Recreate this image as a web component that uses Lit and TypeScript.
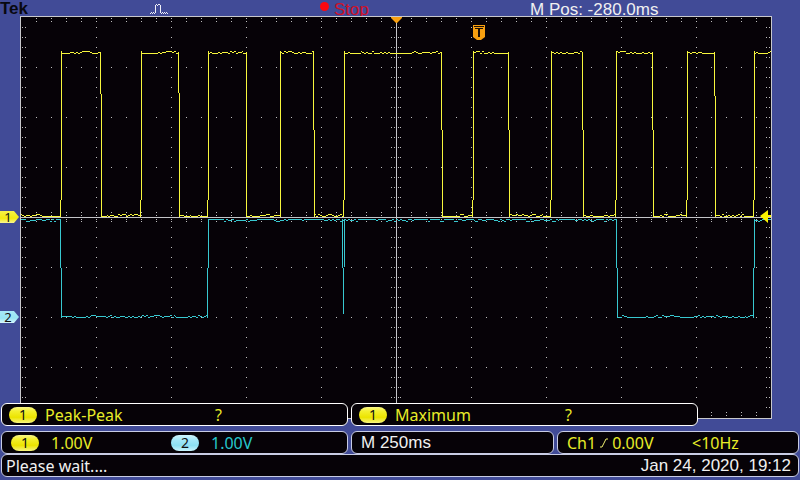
import { LitElement, html, svg, css } from "lit";
import { customElement } from "lit/decorators.js";

const LEFT = 21;
const RIGHT = 771;
const TOP = 17;
const BOTTOM = 418;
const CENTER_X = 396;
const CENTER_Y = 217;

const block = (x: number, y: number, w = 1, h = 1) => `M${x} ${y}h${w}v${h}h${-w}z`;

/** Dotted divisions plus the fine ticks on the axes and edges. */
function graticule(): string {
  let d = "";
  for (let x = LEFT + 15; x < RIGHT; x += 15) {
    for (let y = TOP + 50; y < BOTTOM - 10; y += 50) {
      if (y !== CENTER_Y) d += block(x, y);
    }
    for (const y of [18, 21, 212, 215, 219, 221, 412, 415]) d += block(x, y);
  }
  for (let y = TOP + 10; y < BOTTOM - 2; y += 10) {
    for (let x = LEFT + 75; x < RIGHT; x += 75) {
      if (x !== CENTER_X) d += block(x, y);
    }
    for (const x of [22, 25, 391, 394, 398, 400, 766, 769]) d += block(x, y);
  }
  return d;
}

/** Small repeatable jitter, quiet in places and busy in others. */
function jitter(x: number, seed: number): number {
  const step = Math.floor(x / 2);
  const wave = Math.abs(Math.sin(step * 12.9898 + seed * 78.233) * 43758.5453);
  const h = wave - Math.floor(wave);
  const busy = Math.sin(x / 8 + seed) > -0.5;
  if (!busy) return h < 0.15 ? 1 : 0;
  return h < 0.2 ? 2 : h < 0.6 ? 1 : 0;
}

function level(from: number, to: number, y: number, dir: number, seed: number): string {
  let d = "";
  for (let x = from; x <= to; x++) d += block(x, y + dir * jitter(x, seed));
  return d;
}

/** A vertical edge whose upper and lower halves may sit in different columns. */
function edge(upper: number, lower: number, y0: number, mid: number, y1: number): string {
  return block(upper, y0, 1, mid - y0) + block(lower, mid, 1, y1 - mid + 1);
}

// [rise at base, rise at top, fall at top, fall at base, jog height of the fall]
const PULSES = [
  [60, 61, 100, 101, 94],
  [140, 141, 178, 179, 93],
  [207, 208, 246, 246, 100],
  [280, 280, 313, 314, 130],
  [343, 344, 441, 442, 130],
  [472, 473, 508, 509, 130],
  [550, 551, 582, 583, 130],
  [615, 616, 652, 653, 130],
  [686, 687, 714, 715, 96],
];

function channelOne(): string {
  const hi = 51;
  const lo = 216;
  let d = "";
  let x = LEFT;
  for (const [r0, r1, f1, f0, jog] of PULSES) {
    d += level(x, r0, lo, -1, 5);
    d += edge(r1, r0, hi, 200, lo);
    d += level(r1, f1, hi + 2, -1, 11);
    d += edge(f1, f0, hi + 1, jog, lo);
    x = f0;
  }
  d += level(x, 753, lo, -1, 5);
  d += edge(754, 753, hi, 200, lo);
  d += level(754, 770, hi + 2, -1, 11);
  return d;
}

function channelTwo(): string {
  const hi = 219;
  const lo = 317;
  return (
    level(LEFT, 60, hi, 1, 3) +
    edge(60, 61, hi, 268, lo) +
    level(61, 207, lo, -1, 7) +
    edge(208, 207, hi, 268, lo) +
    level(208, 616, hi, 1, 3) +
    edge(342, 343, hi, 268, 313) +
    block(344, hi, 1, 48) +
    edge(616, 617, hi, 268, lo) +
    level(617, 753, lo, -1, 7) +
    edge(754, 753, hi, 268, lo) +
    level(754, 770, hi, 1, 3)
  );
}

@customElement("scope-screen")
class ScopeScreen extends LitElement {
  static styles = css`
    :host {
      display: block;
    }
    .screen {
      display: block;
      width: 100%;
      font-family: "Noto Sans", "Liberation Sans", sans-serif;
      font-size: 13px;
    }
  `;

  private tag(y: number, n: string, fill: string) {
    return svg`
      <path d="M0 ${y - 6}h14l5 6l-5 6h-14z" fill=${fill}></path>
      <text x="8" y=${y + 5} text-anchor="middle" fill="#101010">${n}</text>`;
  }

  render() {
    return html`
      <svg class="screen" viewBox="0 16 800 403" role="img" aria-label="Waveforms">
        <defs>
          <linearGradient id="yellow" x2="0" y2="1">
            <stop offset="0" stop-color="#f6f24a"></stop>
            <stop offset="0.6" stop-color="#f2ea10"></stop>
            <stop offset="1" stop-color="#f8f690"></stop>
          </linearGradient>
          <linearGradient id="cyan" x2="0" y2="1">
            <stop offset="0" stop-color="#a8e8f8"></stop>
            <stop offset="0.6" stop-color="#98e4f4"></stop>
            <stop offset="1" stop-color="#d8f6fc"></stop>
          </linearGradient>
        </defs>
        <path d="M20 16h752v403h-752z" fill="#c8c8cc"></path>
        <path d="M21 17h750v401h-750z" fill="#060207"></path>
        <g shape-rendering="crispEdges">
          <path d=${graticule()} fill="#bdbdbd"></path>
          <path d="M396 17h1v401h-1zM21 217h750v1h-750z" fill="#c4c4c8"></path>
          <path d=${channelOne()} fill="#f6f63c"></path>
          <path d=${channelTwo()} fill="#38c8d0"></path>
        </g>
        <path d="M391 17h11v1l-5 5h-1l-5 -5z" fill="#f8a010"></path>
        <path d="M473 25h12v12l-4 3h-4l-4 -3z" fill="#f8a010"></path>
        <path d="M474 26h10v1h-10zM475 28h8v1h-3v8h-2v-8h-3z" fill="#1a0e04"></path>
        <path d="M760 216l8 -6v5h3v2h-3v6z" fill="#fcf400"></path>
        ${this.tag(217, "1", "url(#yellow)")} ${this.tag(317, "2", "url(#cyan)")}
      </svg>
    `;
  }
}

@customElement("channel-badge")
class ChannelBadge extends LitElement {
  static properties = { channel: { type: Number } };
  declare channel: number;

  static styles = css`
    :host {
      display: block;
      flex: none;
    }
    .badge {
      width: 28px;
      height: 16px;
      border-radius: 8px;
      text-align: center;
      font: 14px/16px "Noto Sans", sans-serif;
      color: #101010;
    }
    .c1 {
      background: linear-gradient(#f8f68c, #f4f030 25%, #ece400 65%, #f6f480);
    }
    .c2 {
      background: linear-gradient(#d0f4fc, #a4e8f8 30%, #8ce0f2 65%, #c8f4fc);
    }
  `;

  render() {
    return html`<div class="badge c${this.channel}">${this.channel}</div>`;
  }
}

@customElement("app-root")
class AppRoot extends LitElement {
  static styles = css`
    :host {
      display: flex;
      flex-direction: column;
      min-height: 100vh;
      box-sizing: border-box;
      background: #414b97;
      color: #f0f0f0;
      font: 16px/20px "Noto Sans", "Liberation Sans", sans-serif;
      white-space: nowrap;
    }
    .header {
      display: grid;
      grid-template-columns: 150fr 170fr 210fr 270fr;
      height: 16px;
      line-height: 19px;
    }
    .arial,
    .header {
      font-family: "Liberation Sans", Arial, sans-serif;
      font-size: 17px;
    }
    .brand {
      font-weight: bold;
      line-height: 18px;
      color: #080810;
    }
    .status {
      display: flex;
      gap: 5px;
      color: #d01028;
    }
    .dot {
      width: 9px;
      height: 9px;
      margin-top: 2px;
      border-radius: 50%;
      background: #fc0810;
    }
    .pulse {
      display: block;
      width: 18px;
      height: 16px;
    }
    .row {
      display: grid;
      gap: 3px;
      padding: 0 1px;
    }
    .measure {
      position: relative;
      grid-template-columns: 347fr 347fr 98fr;
      margin-top: -16px;
    }
    .settings {
      grid-template-columns: 347fr 203fr 242fr;
      margin-top: 5px;
    }
    .message {
      grid-template-columns: 1fr;
    }
    .panel {
      display: flex;
      align-items: center;
      box-sizing: border-box;
      height: 23px;
      padding: 0 7px;
      border: 1px solid #c8cce4;
      border-radius: 6px;
      background: #060207;
    }
    .measure .panel {
      border-color: #ffffff;
    }
    .message .panel {
      padding: 0 7px 0 4px;
      justify-content: space-between;
    }
    .pair {
      display: flex;
      align-items: center;
      flex: 1;
      gap: 8px;
    }
    .settings .panel {
      padding: 0 9px;
    }
    .settings .pair {
      flex: 160;
      gap: 12px;
    }
    .settings .cyan {
      flex: 167;
    }
    .name {
      flex: 162;
    }
    .value {
      flex: 125;
    }
    .yellow {
      color: #e8ec28;
    }
    .cyan {
      color: #28c8cc;
    }
    .trigger {
      display: flex;
      align-items: center;
      flex: 125;
      gap: 4px;
    }
    .freq {
      flex: 97;
    }
    .slope {
      width: 8px;
      height: 12px;
    }
  `;

  private measurement(name: string) {
    return html`
      <div class="panel yellow">
        <div class="pair">
          <channel-badge channel="1"></channel-badge>
          <span class="name">${name}</span>
          <span class="value">?</span>
        </div>
      </div>
    `;
  }

  render() {
    return html`
      <header class="header">
        <span class="brand">Tek</span>
        <svg class="pulse" viewBox="0 0 18 16" shape-rendering="crispEdges" aria-hidden="true">
          <path
            fill="#f0f0f8"
            d="M0 13h1v1h-1zM1 12h1v1h-1zM2 13h1v1h-1zM3 12h1v1h-1zM4 13h1v1h-1zM5 5h1v8h-1zM6 4h1v1h-1zM7 5h1v1h-1zM8 4h1v1h-1zM9 4h1v1h-1zM10 5h1v8h-1zM11 13h1v1h-1zM12 12h1v1h-1zM13 13h1v1h-1zM14 12h1v1h-1zM15 13h1v1h-1zM16 12h1v1h-1zM17 13h1v1h-1z"
          ></path>
        </svg>
        <div class="status"><span class="dot"></span><span>Stop</span></div>
        <span>M Pos: -280.0ms</span>
      </header>
      <scope-screen></scope-screen>
      <section class="row measure">${this.measurement("Peak-Peak")} ${this.measurement("Maximum")}</section>
      <section class="row settings">
        <div class="panel">
          <div class="pair yellow"><channel-badge channel="1"></channel-badge><span>1.00V</span></div>
          <div class="pair cyan"><channel-badge channel="2"></channel-badge><span>1.00V</span></div>
        </div>
        <div class="panel arial">M 250ms</div>
        <div class="panel yellow">
          <div class="trigger">
            <span>Ch1</span>
            <svg class="slope" viewBox="0 0 8 12" aria-hidden="true">
              <path d="M0 10h2l4 -8h2" fill="none" stroke="#f0f070"></path>
            </svg>
            <span>0.00V</span>
          </div>
          <span class="freq">&lt;10Hz</span>
        </div>
      </section>
      <footer class="row message">
        <div class="panel"><span>Please wait....</span><span class="arial">Jan 24, 2020, 19:12</span></div>
      </footer>
    `;
  }
}
